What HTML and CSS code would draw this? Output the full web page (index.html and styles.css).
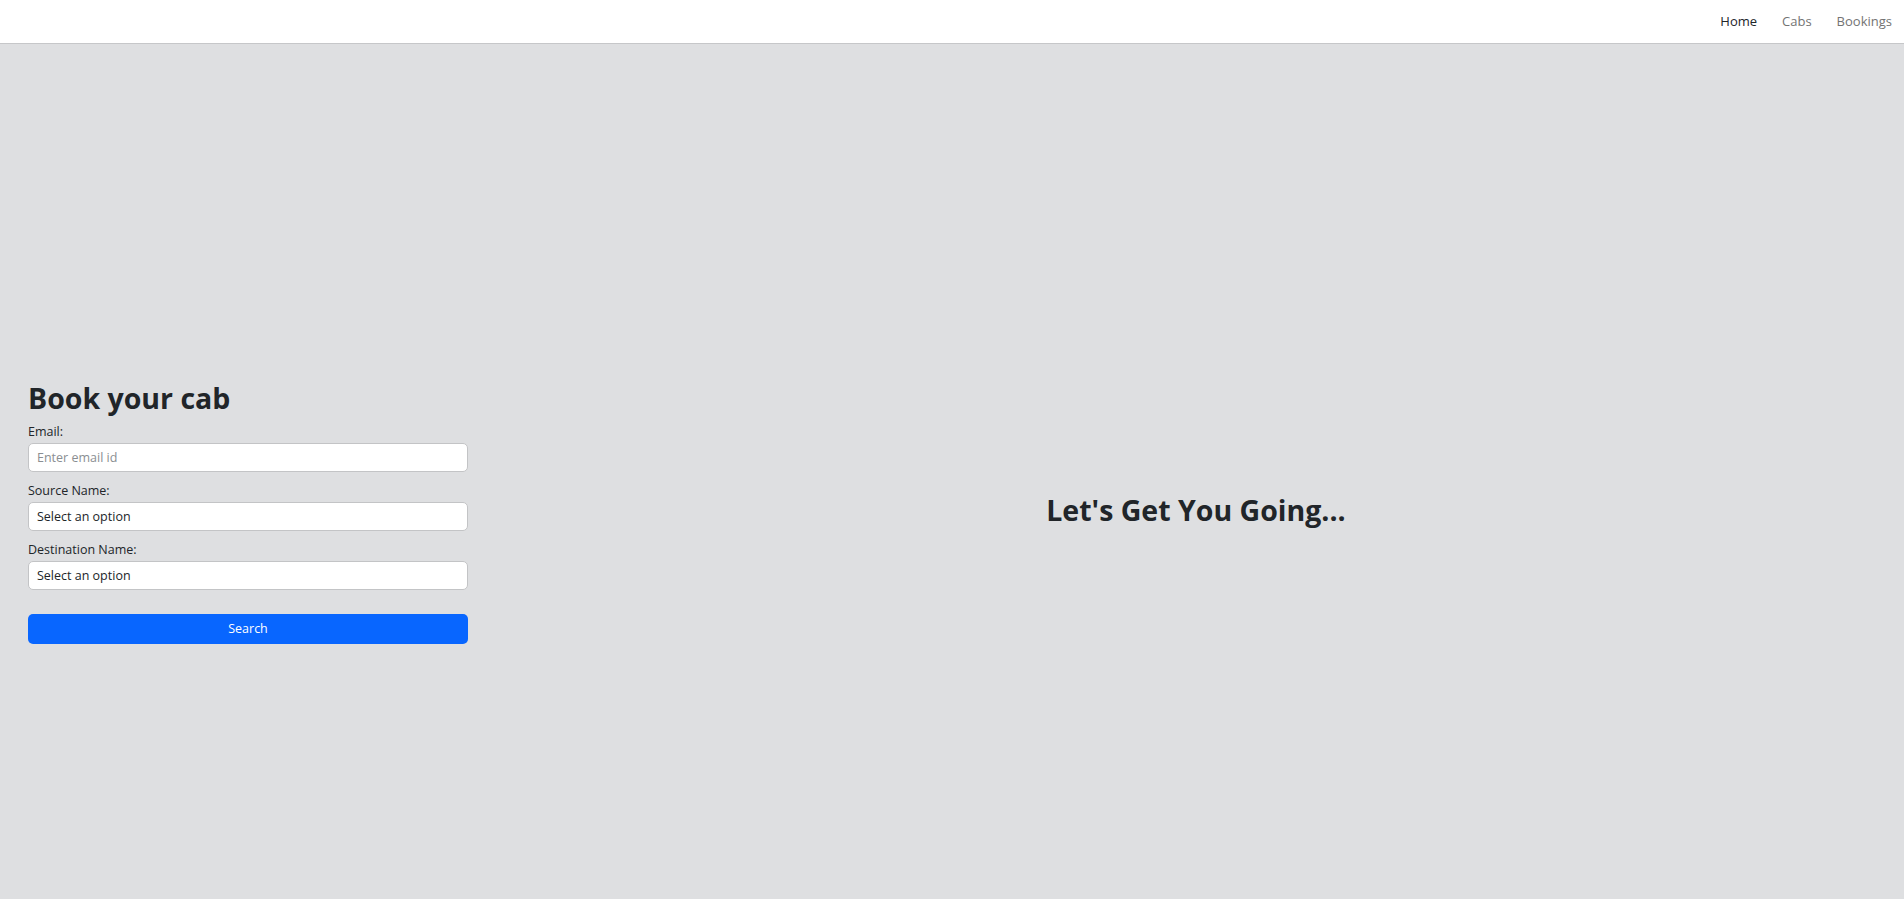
FILE: index.html
```html
<!DOCTYPE html>
<html lang="en">
<head>
<meta charset="utf-8">
<title>Cab Booking</title>
<link rel="stylesheet" href="styles.css">
</head>
<body>
<nav class="navbar">
  <ul class="nav-links">
    <li><a class="nav-link active" href="#">Home</a></li>
    <li><a class="nav-link" href="#">Cabs</a></li>
    <li><a class="nav-link" href="#">Bookings</a></li>
  </ul>
</nav>
<main class="main">
  <section class="form-col">
    <h2 class="form-title">Book your cab</h2>
    <form class="booking-form">
      <div class="field">
        <label class="field-label" for="email">Email:</label>
        <input class="field-input" id="email" type="email" placeholder="Enter email id">
      </div>
      <div class="field">
        <label class="field-label" for="source">Source Name:</label>
        <div class="field-input select">Select an option</div>
      </div>
      <div class="field">
        <label class="field-label" for="dest">Destination Name:</label>
        <div class="field-input select">Select an option</div>
      </div>
      <button class="btn-search" type="button">Search</button>
    </form>
  </section>
  <section class="hero-col">
    <h2 class="hero-title">Let's Get You Going...</h2>
  </section>
</main>
</body>
</html>
```
FILE: styles.css
```css
* { box-sizing: border-box; }
html, body { margin: 0; padding: 0; }
body {
  font-family: "Open Sans", "Noto Sans", sans-serif;
  color: #212529;
  background: #dedfe1;
}
.navbar {
  height: 44px;
  background: #fff;
  border-bottom: 1px solid #c6c7c9;
  display: flex;
  justify-content: flex-end;
  align-items: flex-start;
  padding: 9px 12px 0 0;
}
.nav-links {
  list-style: none;
  margin: 0;
  padding: 0;
  display: flex;
  gap: 25px;
}
.nav-link {
  font-size: 13px;
  line-height: 18px;
  color: #737373;
  text-decoration: none;
}
.nav-link.active { color: #212529; }
.main {
  display: flex;
  align-items: center;
  min-height: 855px;
  padding-top: 84px;
}
.form-col {
  width: 476px;
  padding-left: 28px;
  padding-right: 8px;
  padding-bottom: 2px;
}
.form-title {
  font-size: 28.5px;
  font-weight: 700;
  line-height: 1.2;
  margin: 0 0 6px;
}
.field { margin-bottom: 9px; }
.field-label {
  display: block;
  font-size: 12.5px;
  line-height: 19px;
  margin-bottom: 2px;
}
.field-input {
  display: flex;
  align-items: center;
  width: 100%;
  height: 29px;
  border: 1px solid #c3c4c6;
  border-radius: 5px;
  background: #fff;
  padding: 0 8px;
  font-family: inherit;
  font-size: 12.5px;
  color: #212529;
}
.field-input::placeholder { color: #8a8e92; }
.btn-search {
  margin-top: 15px;
  width: 100%;
  height: 30px;
  border: 0;
  border-radius: 5px;
  background: #0866ff;
  color: #fff;
  font-family: inherit;
  font-size: 12.5px;
}
.hero-col {
  flex: 1;
  display: flex;
  justify-content: center;
  padding-left: 12px;
  padding-bottom: 8px;
}
.hero-title {
  font-size: 28.5px;
  font-weight: 700;
  margin: 0;
}
```
